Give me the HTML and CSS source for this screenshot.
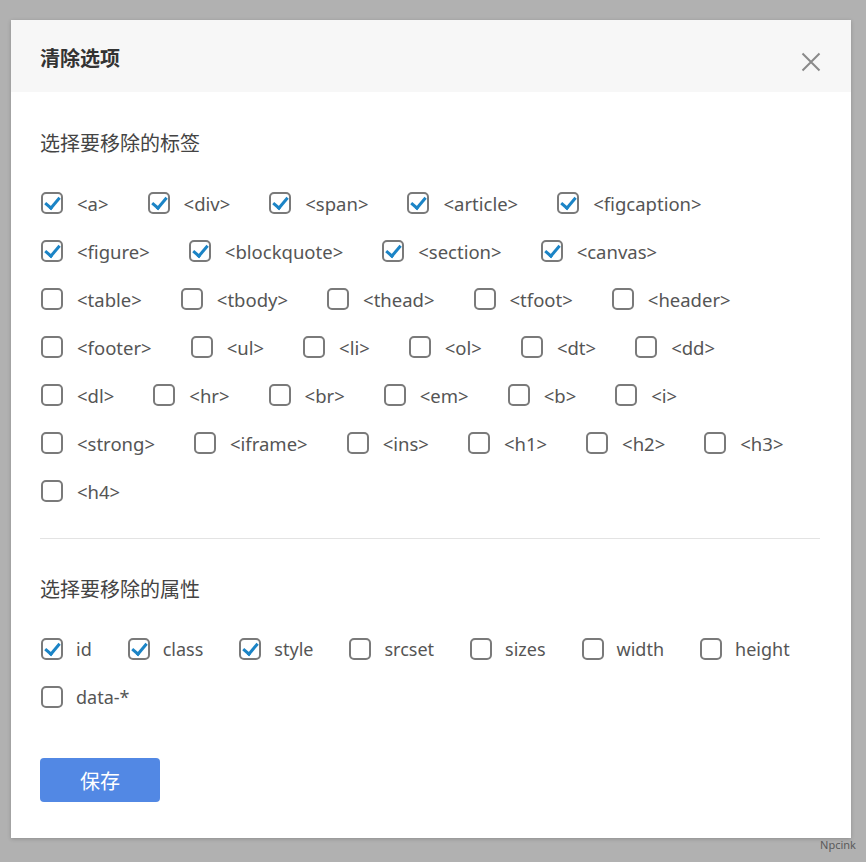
FILE: index.html
```html
<!DOCTYPE html>
<html>
<head>
<meta charset="UTF-8">
<title>清除选项</title>
<link rel="stylesheet" href="styles.css">
</head>
<body>

    <div class="dialog">
        <div class="dialog-header">
            <h2>清除选项</h2>
            <button type="button" class="close" aria-label="关闭">
                <svg width="20" height="20" viewBox="0 0 20 20">
                    <path d="M1.5 1.5 L18.5 18.5 M18.5 1.5 L1.5 18.5" stroke="#8a8a8a" stroke-width="2" fill="none"/>
                </svg>
            </button>
        </div>

        <div class="dialog-body">
            <p class="section-title">选择要移除的标签</p>
            <div class="option-list" id="tags"></div>

            <hr class="divider">

            <p class="section-title">选择要移除的属性</p>
            <div class="option-list" id="attrs"></div>

            <button type="button" class="save">保存</button>
        </div>
    </div>

    <div class="watermark">Npcink</div>

    <script type="text/javascript">
    // 标签列表
    const tagData = [
        ["a", true], ["div", true], ["span", true], ["article", true], ["figcaption", true],
        ["figure", true], ["blockquote", true], ["section", true], ["canvas", true],
        ["table", false], ["tbody", false], ["thead", false], ["tfoot", false], ["header", false],
        ["footer", false], ["ul", false], ["li", false], ["ol", false], ["dt", false], ["dd", false],
        ["dl", false], ["hr", false], ["br", false], ["em", false], ["b", false], ["i", false],
        ["strong", false], ["iframe", false], ["ins", false], ["h1", false], ["h2", false], ["h3", false],
        ["h4", false]
    ];

    // 属性列表
    const attrData = [
        ["id", true], ["class", true], ["style", true], ["srcset", false],
        ["sizes", false], ["width", false], ["height", false], ["data-*", false]
    ];

    function render(container, list, wrap) {
        let html = "";
        list.forEach(item => {
            const text = wrap ? `<${item[0]}>` : item[0];
            const safe = text.replace(/</g, "&lt;").replace(/>/g, "&gt;");
            html += `<label class="option">
                        <input type="checkbox" ${item[1] ? "checked" : ""}>
                        <span>${safe}</span>
                    </label>`;
        });
        container.innerHTML = html;
    }

    render(document.querySelector("#tags"), tagData, true);
    render(document.querySelector("#attrs"), attrData, false);
    </script>

</body>
</html>
```

FILE: styles.css
```css
*{
    box-sizing: border-box;
}

body{
    background-color: #b1b1b1;
    margin: 0;
    padding: 20px 0 0 11px;
    height: 862px;
    overflow: hidden;
    font-family: "Noto Sans", "Noto Sans CJK SC", sans-serif;
    position: relative;
}

.dialog {
    background-color: #fff;
    width: 840px;
    box-shadow: 0 1px 4px rgba(0, 0, 0, 0.2);
}

.dialog-header {
    background-color: #f7f7f7;
    height: 72px;
    display: flex;
    align-items: center;
    justify-content: space-between;
    padding: 0 28px 0 29px;
}

.dialog-header h2 {
    margin: 0;
    font-size: 20px;
    font-weight: 700;
    color: #333;
    font-family: "Noto Sans CJK SC", sans-serif;
    position: relative;
    top: 1px;
}

.close {
    background: none;
    border: none;
    padding: 0;
    width: 24px;
    height: 24px;
    display: flex;
    align-items: center;
    justify-content: center;
    cursor: pointer;
    position: relative;
    top: 6px;
}

.dialog-body {
    padding: 36px 31px 36px 29px;
}

.section-title {
    margin: 0;
    font-size: 20px;
    line-height: 30px;
    color: #444;
    font-family: "Noto Sans CJK SC", sans-serif;
}

.option-list {
    display: flex;
    flex-wrap: wrap;
    margin-top: 21px;
    margin-right: -11px;
}

.option {
    display: flex;
    align-items: center;
    height: 48px;
    margin-right: 38px;
    cursor: pointer;
    font-size: 18.5px;
    color: #555;
}

.option input {
    appearance: none;
    -webkit-appearance: none;
    width: 22px;
    height: 22px;
    margin: 0 14px 0 1px;
    border: 2px solid #7a7a7a;
    border-radius: 5px;
    background: #fff;
    position: relative;
    flex: none;
}

.option input:checked::after {
    content: "";
    position: absolute;
    left: 5px;
    top: 0px;
    width: 6px;
    height: 12px;
    border-right: 3px solid #1b84c6;
    border-bottom: 3px solid #1b84c6;
    transform: rotate(40deg);
}

#attrs .option {
    font-size: 18px;
    margin-right: 35px;
}

#attrs .option input {
    margin-right: 13px;
}

.divider {
    border: none;
    border-top: 1px solid #e3e3e3;
    margin: 23px 0 35px;
}

.save {
    margin-top: 37px;
    width: 120px;
    height: 44px;
    background-color: #5288e4;
    color: #fff;
    border: none;
    border-radius: 4px;
    font-size: 20px;
    font-family: "Noto Sans CJK SC", sans-serif;
    cursor: pointer;
}

.watermark {
    position: absolute;
    right: 10px;
    bottom: 10px;
    font-size: 11px;
    color: #5a5a5a;
    font-family: "Noto Sans", sans-serif;
}
```
